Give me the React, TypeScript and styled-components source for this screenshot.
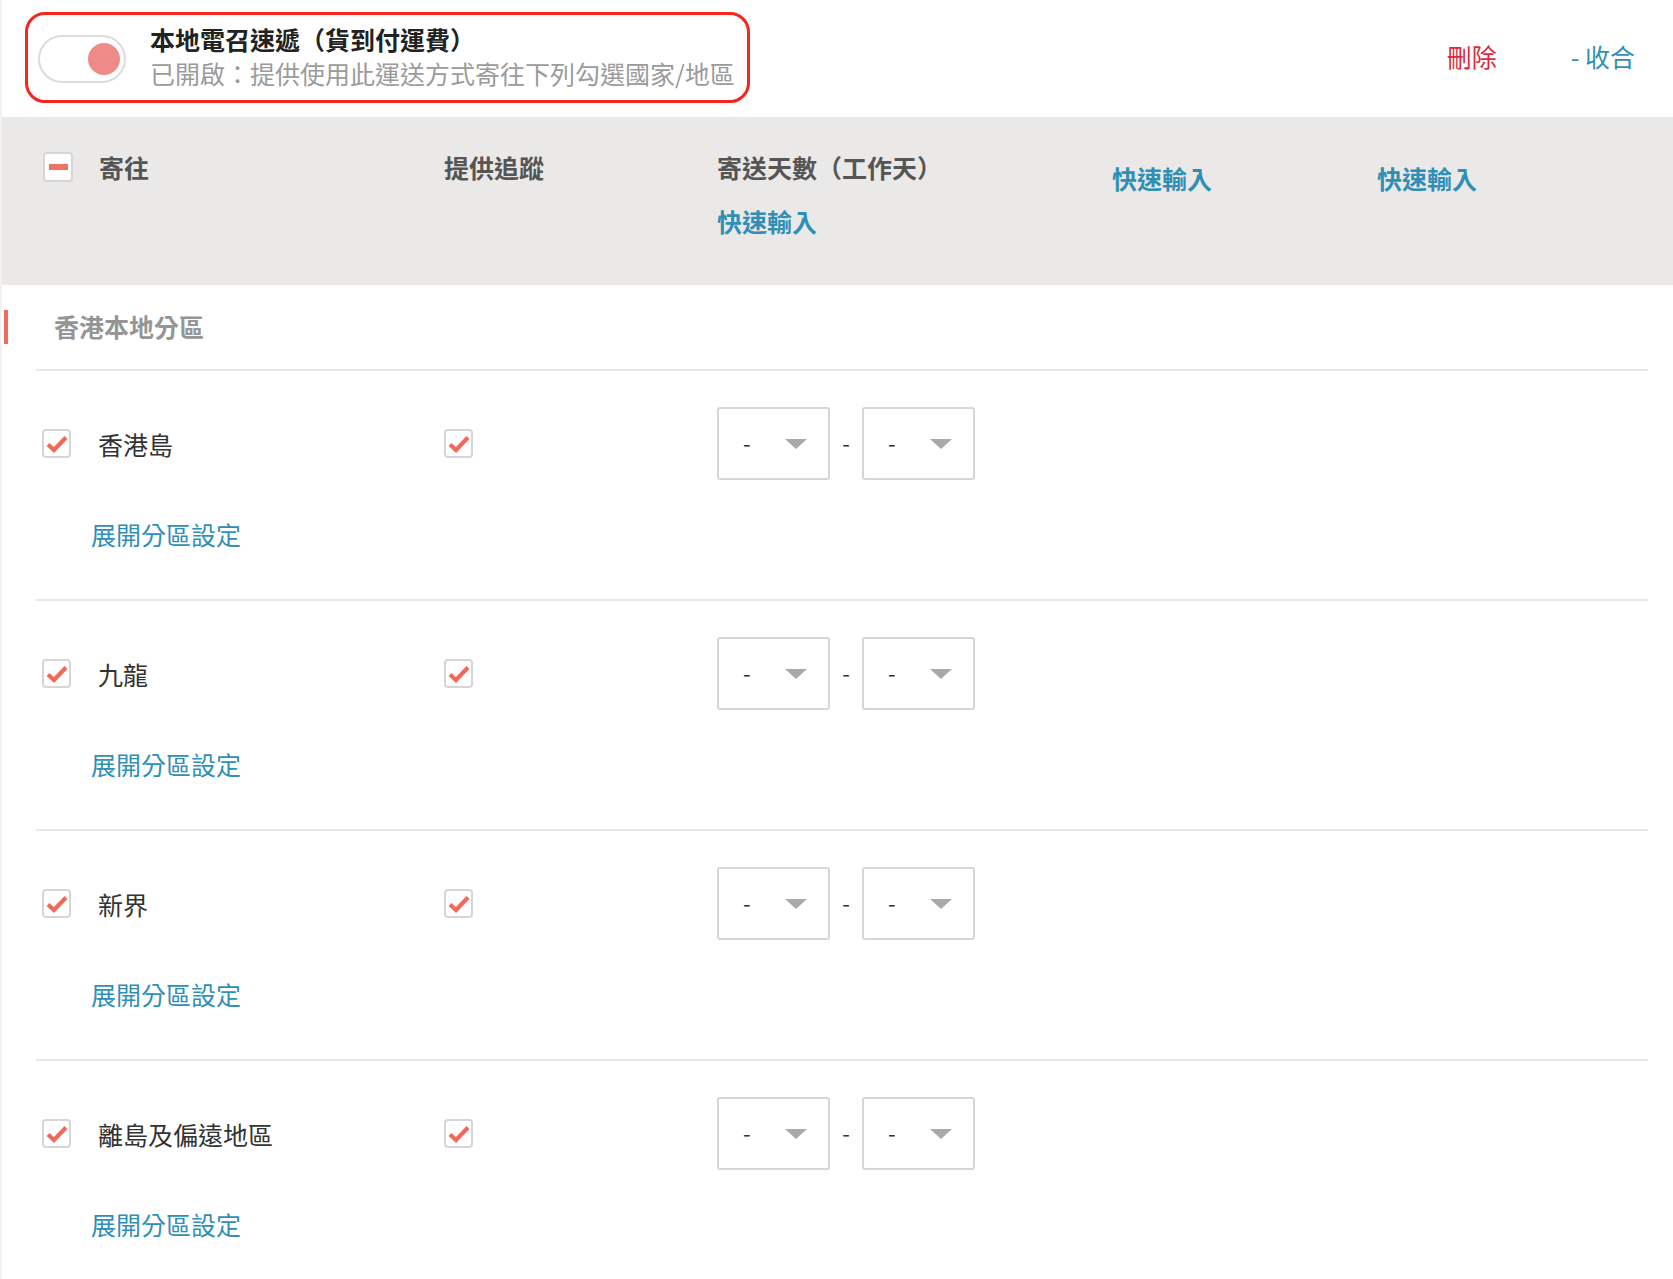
import React from "react";
import styled, { createGlobalStyle } from "styled-components";

const Global = createGlobalStyle`
  html, body { margin: 0; padding: 0; background: #fff; }
  body { font-family: "Noto Sans CJK TC", "Noto Sans CJK SC", "Noto Sans", sans-serif; }
  * { box-sizing: border-box; }
`;

const BLUE = "#2f8fb6";
const COLS = "401px 273px 395px 265px 1fr";

const Page = styled.div`
  border-left: 2px solid #f2f2f2;
  min-height: 1279px;
  width: 1673px;
`;

const TopBar = styled.div`
  height: 117px;
  display: flex;
  align-items: center;
  padding: 0 38px 0 23px;
`;

const Highlight = styled.div`
  height: 91px;
  border: 3px solid #f5261c;
  border-radius: 20px;
  display: flex;
  align-items: center;
  gap: 24px;
  padding: 0 12px 0 10px;
  margin-top: -2px;
`;

const Toggle = styled.div`
  width: 88px;
  height: 48px;
  border: 2px solid #dcdcdc;
  border-radius: 24px;
  background: #fff;
  display: flex;
  align-items: center;
  justify-content: flex-end;
  padding-right: 4px;
  margin-top: 2px;
`;

const Knob = styled.span`
  width: 32px;
  height: 32px;
  border-radius: 50%;
  background: #ee8a87;
`;

const TitleBlock = styled.div`
  display: flex;
  flex-direction: column;
  margin-top: -3px;
`;

const Title = styled.div`
  font-size: 25px;
  line-height: 34px;
  font-weight: 700;
  color: #222;
`;

const Subtitle = styled.div`
  font-size: 25px;
  line-height: 34px;
  color: #9b9b9b;
`;

const Actions = styled.div`
  margin-left: auto;
  margin-top: -5px;
  display: flex;
  gap: 74px;
  align-items: center;
`;

const TextAction = styled.span<{ $danger?: boolean }>`
  font-size: 25px;
  line-height: 34px;
  color: ${(p) => (p.$danger ? "#e2273d" : BLUE)};
  cursor: pointer;
`;

const HeaderBand = styled.div`
  background: #eae9e7;
  height: 168px;
  display: grid;
  grid-template-columns: ${COLS};
  padding: 33px 0 0 41px;
  align-items: start;
`;

const HeadCell = styled.div<{ $offset?: number }>`
  display: flex;
  flex-direction: column;
  gap: 20px;
  padding-top: ${(p) => p.$offset ?? 0}px;
`;

const HeadLine = styled.div`
  display: flex;
  align-items: center;
  gap: 26px;
`;

const HeadText = styled.span`
  font-size: 25px;
  line-height: 34px;
  font-weight: 700;
  color: #555;
`;

const QuickInput = styled.span`
  font-size: 25px;
  line-height: 34px;
  font-weight: 700;
  color: ${BLUE};
  cursor: pointer;
`;

const Box = styled.span<{ $size?: number }>`
  width: ${(p) => p.$size ?? 29}px;
  height: ${(p) => p.$size ?? 29}px;
  border: 2px solid #d6d6d6;
  border-radius: 4px;
  background: #fff;
  display: inline-flex;
  align-items: center;
  justify-content: center;
  flex: none;
`;

const MinusBar = styled.span`
  width: 19px;
  height: 6px;
  background: #f07262;
`;

const SectionTitle = styled.div`
  height: 84px;
  display: flex;
  align-items: center;
  padding-left: 2px;
`;

const SectionMark = styled.span`
  width: 4px;
  height: 34px;
  background: #f26a5c;
`;

const SectionText = styled.span`
  margin-left: 46px;
  margin-top: -2px;
  font-size: 25px;
  line-height: 34px;
  font-weight: 700;
  color: #959595;
`;

const Row = styled.div`
  margin: 0 25px 0 34px;
  border-top: 2px solid #e8e8e8;
  padding: 36px 0 48px 6px;
  display: flex;
  flex-direction: column;
  gap: 37px;
`;

const RowMain = styled.div`
  display: grid;
  grid-template-columns: 402px 273px 1fr;
  align-items: center;
  height: 73px;
`;

const NameCell = styled.div`
  display: flex;
  align-items: center;
  gap: 27px;
`;

const Name = styled.span`
  font-size: 25px;
  line-height: 34px;
  color: #333;
`;

const ExpandLink = styled.span`
  margin-left: 49px;
  font-size: 25px;
  line-height: 34px;
  color: ${BLUE};
  cursor: pointer;
`;

const Range = styled.div`
  display: flex;
  align-items: center;
`;

const Select = styled.div`
  width: 113px;
  height: 73px;
  border: 2px solid #d6d6d6;
  border-radius: 3px;
  background: #fff;
  display: flex;
  align-items: center;
  padding: 0 21px 0 24px;
  justify-content: space-between;
`;

const SelectValue = styled.span`
  font-size: 22px;
  line-height: 30px;
  color: #333;
  margin-top: -4px;
`;

const Arrow = styled.span`
  width: 0;
  height: 0;
  border-left: 11px solid transparent;
  border-right: 11px solid transparent;
  border-top: 10px solid #a9a9a9;
`;

const RangeDash = styled.span`
  width: 32px;
  text-align: center;
  font-size: 22px;
  line-height: 30px;
  color: #333;
  margin-top: -3px;
`;

const Check = () => (
  <svg width="22" height="18" viewBox="0 0 22 18">
    <path d="M2 9.5 L8 15 L20 2.5" fill="none" stroke="#f06a5b" strokeWidth="4.2" strokeLinecap="butt" strokeLinejoin="miter" />
  </svg>
);

const CheckBox = () => (
  <Box>
    <Check />
  </Box>
);

const DaySelect = () => (
  <Select>
    <SelectValue>-</SelectValue>
    <Arrow />
  </Select>
);

const regions = ["香港島", "九龍", "新界", "離島及偏遠地區"];

export default function App() {
  return (
    <>
      <Global />
      <Page>
        <TopBar>
          <Highlight>
            <Toggle>
              <Knob />
            </Toggle>
            <TitleBlock>
              <Title>本地電召速遞（貨到付運費）</Title>
              <Subtitle>已開啟：提供使用此運送方式寄往下列勾選國家/地區</Subtitle>
            </TitleBlock>
          </Highlight>
          <Actions>
            <TextAction $danger>刪除</TextAction>
            <TextAction>- 收合</TextAction>
          </Actions>
        </TopBar>

        <HeaderBand>
          <HeadCell>
            <HeadLine>
              <Box $size={30}>
                <MinusBar />
              </Box>
              <HeadText>寄往</HeadText>
            </HeadLine>
          </HeadCell>
          <HeadCell>
            <HeadText>提供追蹤</HeadText>
          </HeadCell>
          <HeadCell>
            <HeadText>寄送天數（工作天）</HeadText>
            <QuickInput>快速輸入</QuickInput>
          </HeadCell>
          <HeadCell $offset={11}>
            <QuickInput>快速輸入</QuickInput>
          </HeadCell>
          <HeadCell $offset={11}>
            <QuickInput>快速輸入</QuickInput>
          </HeadCell>
        </HeaderBand>

        <SectionTitle>
          <SectionMark />
          <SectionText>香港本地分區</SectionText>
        </SectionTitle>

        {regions.map((r) => (
          <Row key={r}>
            <RowMain>
              <NameCell>
                <CheckBox />
                <Name>{r}</Name>
              </NameCell>
              <div>
                <CheckBox />
              </div>
              <Range>
                <DaySelect />
                <RangeDash>-</RangeDash>
                <DaySelect />
              </Range>
            </RowMain>
            <ExpandLink>展開分區設定</ExpandLink>
          </Row>
        ))}
      </Page>
    </>
  );
}
